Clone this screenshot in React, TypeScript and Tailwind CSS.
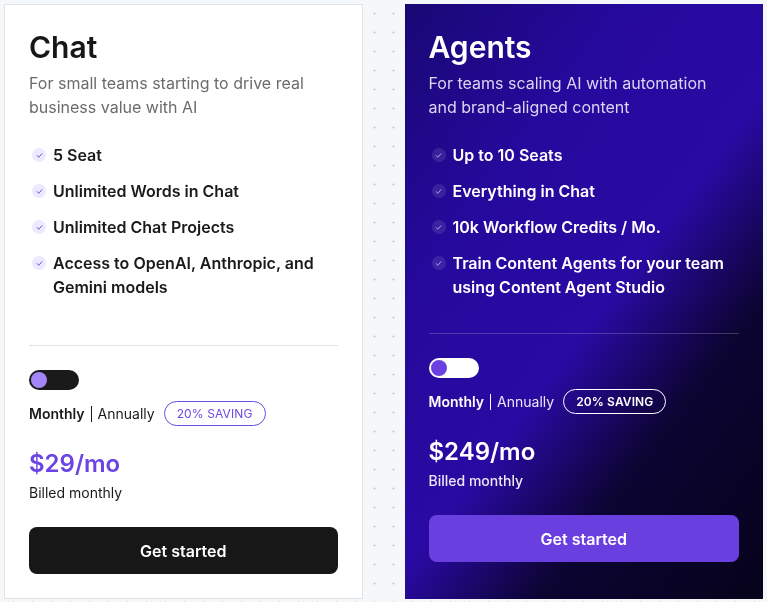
import React from 'react';

const chatFeatures = [
    '5 Seat',
    'Unlimited Words in Chat',
    'Unlimited Chat Projects',
    'Access to OpenAI, Anthropic, and Gemini models',
];

const agentFeatures = [
    'Up to 10 Seats',
    'Everything in Chat',
    '10k Workflow Credits / Mo.',
    'Train Content Agents for your team using Content Agent Studio',
];

const Check = ({ dark }: { dark?: boolean }) => (
    <span
        className={`mt-[5px] ml-[3px] flex h-[14px] w-[14px] shrink-0 items-center justify-center rounded-full ${dark ? 'bg-white/10' : 'bg-[#ede9fe]'}`}
    >
        <svg viewBox="0 0 10 10" className="h-[7px] w-[7px]" fill="none">
            <path
                d="M1.5 5.2 L4 7.5 L8.5 2.5"
                stroke={dark ? '#b7a6f2' : '#6d4ae0'}
                strokeWidth="1.4"
                strokeLinecap="round"
                strokeLinejoin="round"
            />
        </svg>
    </span>
);

const Features = ({ items, dark }: { items: string[]; dark?: boolean }) => (
    <ul className="mt-6 flex flex-col gap-3">
        {items.map(item => (
            <li key={item} className="flex gap-[7px]">
                <Check dark={dark} />
                <span className={`text-base leading-6 font-semibold ${dark ? 'text-white' : 'text-[#1a1a1a]'}`}>{item}</span>
            </li>
        ))}
    </ul>
);

export default function App() {
    return (
        <div className="min-h-[602px] w-[767px] bg-[#f5f8fa] bg-[radial-gradient(circle,#d3d8dc_1px,transparent_1.2px)] bg-[length:19px_19px] bg-[position:4px_4px] p-1 font-['Inter',sans-serif]">
            <div className="grid grid-cols-2 gap-[42px]">
                {/* Chat plan */}
                <div className="flex flex-col border border-[#e3e3e3] bg-white px-6 pt-6 pb-6">
                    <h2 className="text-[30px] leading-9 font-semibold text-[#171717]">Chat</h2>
                    <p className="mt-1.5 text-base leading-6 text-[#6b6b6b]">
                        For small teams starting to drive real business value with AI
                    </p>
                    <Features items={chatFeatures} />
                    <div className="mt-[46px] h-px bg-[#e2e2e2]" />
                    <div className="mt-6 flex h-5 w-[50px] items-center rounded-full bg-[#1a1a1a] px-0.5">
                        <span className="h-4 w-4 rounded-full bg-[#a385f7]" />
                    </div>
                    <div className="mt-[11px] flex h-[25px] items-center text-sm text-[#1a1a1a]">
                        <span className="font-semibold">Monthly</span>
                        <span className="mx-1.5 h-4 w-px bg-[#1a1a1a]" />
                        <span>Annually</span>
                        <span className="ml-[9px] flex h-[25px] items-center rounded-full border border-[#6d4ae0] px-3 text-[12px] tracking-[0.01em] text-[#6d4ae0]">
                            20% SAVING
                        </span>
                    </div>
                    <div className="mt-[22px] text-2xl leading-8 font-semibold text-[#6b44e3]">$29/mo</div>
                    <div className="mt-[3px] text-sm leading-5 text-[#1a1a1a]">Billed monthly</div>
                    <button className="mt-6 h-[47px] w-full rounded-lg bg-[#171717] text-base font-semibold text-white">
                        Get started
                    </button>
                </div>

                {/* Agents plan */}
                <div className="relative flex flex-col overflow-hidden bg-[linear-gradient(127deg,#180770_0%,#24089a_28%,#2809a0_53%,#0b0330_72%,#05021a_100%)] px-6 pt-[25px] pb-6">
                    <svg className="pointer-events-none absolute inset-0 h-full w-full opacity-[0.12] mix-blend-overlay" aria-hidden>
                        <filter id="grain">
                            <feTurbulence type="fractalNoise" baseFrequency="0.9" numOctaves="2" stitchTiles="stitch" />
                            <feColorMatrix type="saturate" values="0" />
                        </filter>
                        <rect width="100%" height="100%" filter="url(#grain)" />
                    </svg>
                    <div className="relative flex flex-col">
                        <h2 className="text-[30px] leading-9 font-semibold text-white">Agents</h2>
                        <p className="mt-1.5 text-base leading-6 text-[#ddd6f3]">
                            For teams scaling AI with automation and brand-aligned content
                        </p>
                        <Features items={agentFeatures} dark />
                        <div className="mt-[34px] h-px bg-white/20" />
                        <div className="mt-6 flex h-5 w-[50px] items-center rounded-full bg-white px-0.5">
                            <span className="h-4 w-4 rounded-full bg-[#6b40e0]" />
                        </div>
                        <div className="mt-[11px] flex h-[25px] items-center text-sm text-white">
                            <span className="font-semibold">Monthly</span>
                            <span className="mx-1.5 h-4 w-px bg-white" />
                            <span className="text-white/90">Annually</span>
                            <span className="ml-[9px] flex h-[25px] items-center rounded-full border border-white px-3 text-[12px] font-semibold tracking-[0.01em] text-white">
                                20% SAVING
                            </span>
                        </div>
                        <div className="mt-[22px] text-2xl leading-8 font-semibold text-white">$249/mo</div>
                        <div className="mt-[3px] text-sm leading-5 font-medium text-[#ece8f8]">Billed monthly</div>
                        <button className="mt-6 h-[47px] w-full rounded-lg bg-[#6a3fdf] text-base font-semibold text-white">
                            Get started
                        </button>
                    </div>
                </div>
            </div>
        </div>
    );
}
